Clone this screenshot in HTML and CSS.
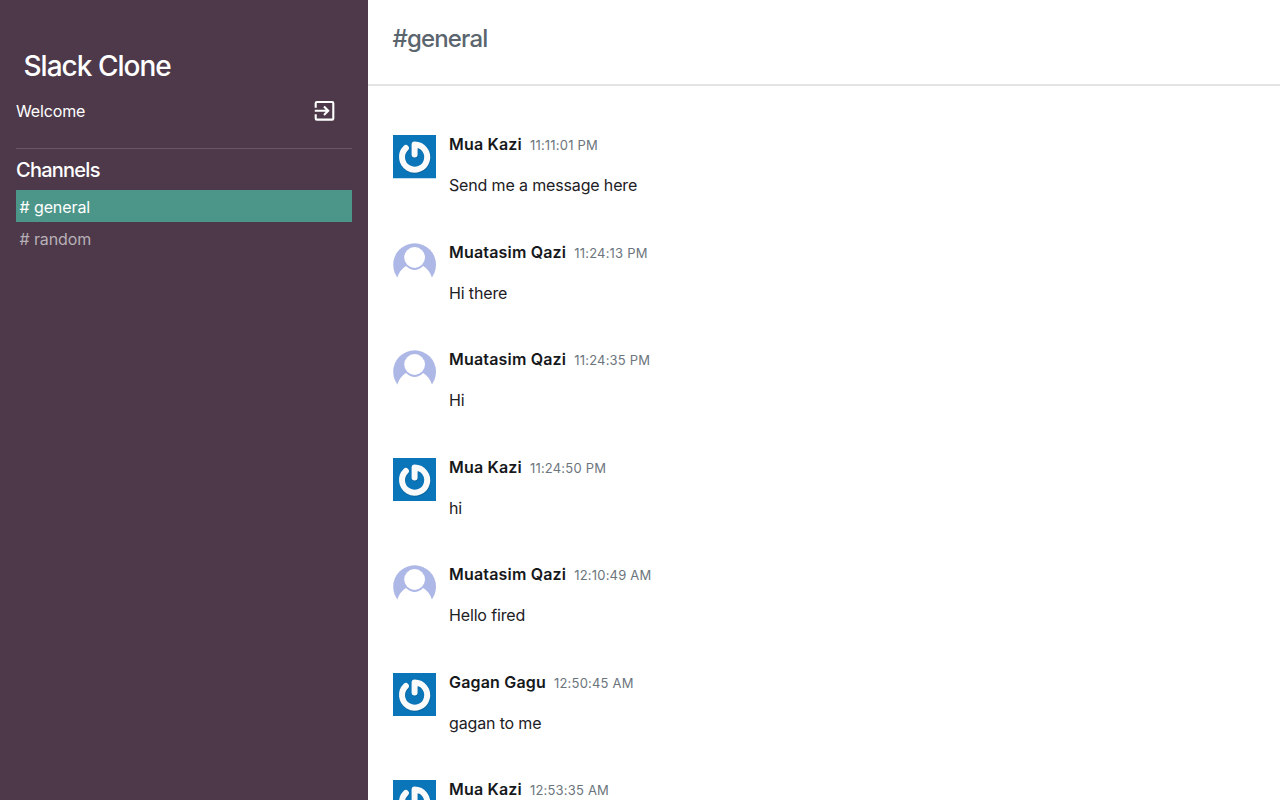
FILE: index.html
```
<!DOCTYPE html>
<html lang="en">
<head>
<meta charset="utf-8">
<title>Slack Clone</title>
<link rel="stylesheet" href="styles.css">
</head>
<body>
<svg class="symbols" aria-hidden="true">
  <symbol id="power" viewBox="0 0 43.5 43.5">
    <rect width="43.5" height="43.5" fill="#0a75b9"/>
    <path d="M21.6 19.6V9.5A12.6 12.6 0 1 1 12.9 13" transform="translate(.5 .9)" fill="none" stroke="#075586" stroke-opacity=".5" stroke-width="6" stroke-linecap="round" stroke-linejoin="round"/>
    <path d="M21.6 19.6V9.5A12.6 12.6 0 1 1 12.9 13" fill="none" stroke="#fafafa" stroke-width="6" stroke-linecap="round" stroke-linejoin="round"/>
  </symbol>
  <symbol id="person" viewBox="0 0 43.5 43.5">
    <circle cx="21.6" cy="21.7" r="21.4" fill="#aeb8e6"/>
    <path d="M0 44V35.4H3.9Q6.6 26.8 13 23Q21.6 31 30.2 23Q36.6 26.8 39.3 35.4H43.5V44Z" fill="#fff"/>
    <circle cx="21.6" cy="14.5" r="10.4" fill="#fff"/>
  </symbol>
</svg>
<div class="app">
  <aside class="sidebar">
    <h1 class="brand">Slack Clone</h1>
    <div class="user">
      <span class="welcome">Welcome</span>
      <svg class="logout" viewBox="0 0 24 24"><path d="M3.7 8.8V4.2Q3.7 3 4.9 3H20.1Q21.3 3 21.3 4.2V19.4Q21.3 20.6 20.1 20.6H4.9Q3.7 20.6 3.7 19.4V15.2M2.8 11.8H16M12 7.6L16.2 11.8L12 16" fill="none" stroke="#fff" stroke-width="2.1"/></svg>
    </div>
    <h2 class="heading">Channels</h2>
    <nav class="channels">
      <a class="channel active"># general</a>
      <a class="channel"># random</a>
    </nav>
  </aside>
  <main class="main">
    <header class="header"><span class="title">#general</span></header>
    <section class="messages">
      <article class="message"><svg class="avatar"><use href="#power"/></svg><div><div class="meta"><b class="name">Mua Kazi</b><time class="time">11:11:01 PM</time></div><p class="text">Send me a message here</p></div></article>
      <article class="message"><svg class="avatar"><use href="#person"/></svg><div><div class="meta"><b class="name">Muatasim Qazi</b><time class="time">11:24:13 PM</time></div><p class="text">Hi there</p></div></article>
      <article class="message"><svg class="avatar"><use href="#person"/></svg><div><div class="meta"><b class="name">Muatasim Qazi</b><time class="time">11:24:35 PM</time></div><p class="text">Hi</p></div></article>
      <article class="message"><svg class="avatar"><use href="#power"/></svg><div><div class="meta"><b class="name">Mua Kazi</b><time class="time">11:24:50 PM</time></div><p class="text">hi</p></div></article>
      <article class="message"><svg class="avatar"><use href="#person"/></svg><div><div class="meta"><b class="name">Muatasim Qazi</b><time class="time">12:10:49 AM</time></div><p class="text">Hello fired</p></div></article>
      <article class="message"><svg class="avatar"><use href="#power"/></svg><div><div class="meta"><b class="name">Gagan Gagu</b><time class="time">12:50:45 AM</time></div><p class="text">gagan to me</p></div></article>
      <article class="message"><svg class="avatar"><use href="#power"/></svg><div><div class="meta"><b class="name">Mua Kazi</b><time class="time">12:53:35 AM</time></div></div></article>
    </section>
  </main>
</div>
</body>
</html>
```
FILE: styles.css
```
* { box-sizing: border-box; }
body { margin: 0; font: 16px/24px Inter, "Liberation Sans", sans-serif; color: #1d2024; background: #fff; overflow: hidden; }
h1, h2, p { margin: 0; }
.symbols { display: none; }
.app { display: flex; height: 800px; overflow: hidden; }
.sidebar { flex: 0 0 368px; padding: 48px 16px 0; background: #4d394a; color: #fff; }
.brand { padding-left: 7.5px; font-size: 28px; line-height: 36px; font-weight: 500; letter-spacing: -0.98px; }
.user { display: flex; justify-content: space-between; align-items: flex-start; height: 65px; padding: 15px 16px 0 0; border-bottom: 1px solid #685567; }
.welcome { font-size: 16px; letter-spacing: -0.15px; }
.logout { width: 24px; height: 24px; }
.heading { margin-top: 9px; font-size: 20px; line-height: 24px; font-weight: 500; letter-spacing: -0.75px; }
.channels { margin-top: 8px; }
.channel { display: block; height: 32px; padding: 0 3.5px; line-height: 34px; color: #b8b0b7; letter-spacing: -0.1px; }
.active { background: #4c9689; color: #fff; }
.main { flex: 1; min-width: 0; }
.header { height: 86px; padding: 23px 24.5px 0; border-bottom: 2px solid #e4e4e4; }
.title { font-size: 24px; line-height: 32px; color: #5a656e; font-weight: 500; letter-spacing: -0.85px; }
.messages { padding: 49.3px 24.5px 0; }
.message { display: flex; gap: 13px; height: 107.5px; }
.avatar { width: 43.5px; height: 43.5px; flex: none; }
.meta { display: flex; align-items: baseline; gap: 8px; line-height: 18px; }
.name { font-weight: 600; font-size: 16px; letter-spacing: 0.18px; color: #16181b; }
.time { font-size: 13px; letter-spacing: 0.2px; color: #6c757d; }
.text { margin-top: 18.8px; line-height: 24px; letter-spacing: -0.15px; }
```
